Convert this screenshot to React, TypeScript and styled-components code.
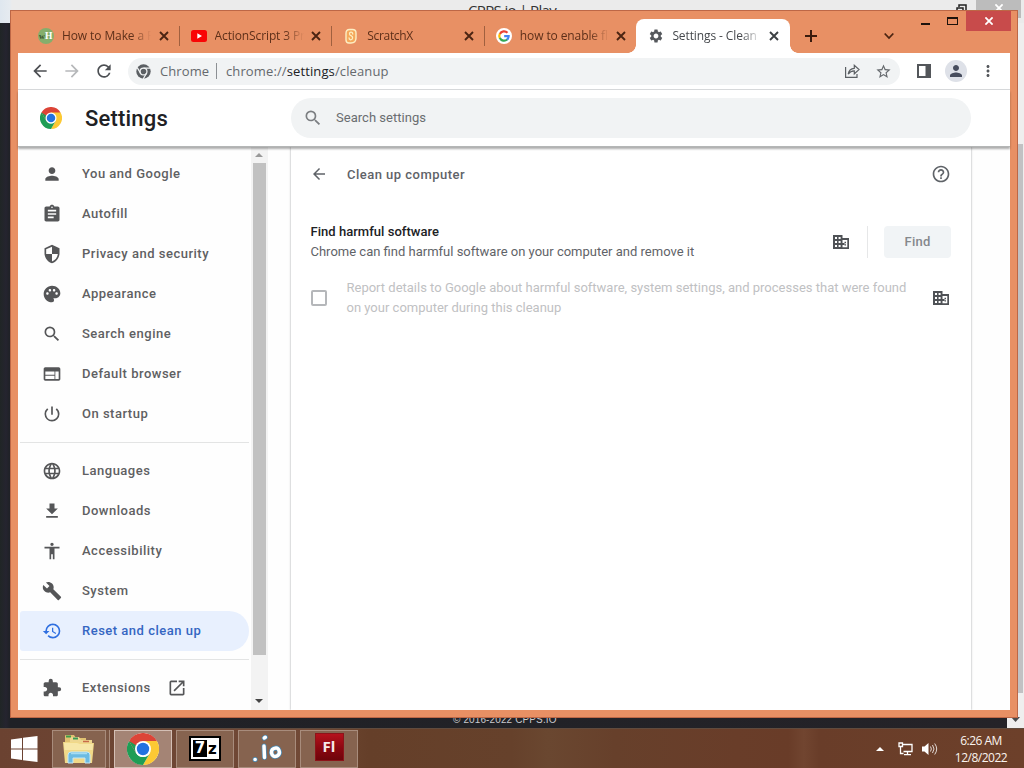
import React from "react";
import styled, {createGlobalStyle, css} from "styled-components";
import {
  MdPerson, MdAssignment, MdSecurity, MdPalette, MdSearch, MdWeb, MdPowerSettingsNew,
  MdLanguage, MdRestore, MdOpenInNew, MdArrowBack, MdArrowForward,
  MdRefresh, MdHelpOutline, MdSettings, MdStarBorder, MdMoreVert, MdExtension,
} from "react-icons/md";

const GlobalStyle = createGlobalStyle`
  * {
    box-sizing: border-box;
  }

  body {
    margin: 0;
    overflow: hidden;
    font-family: Roboto, "Liberation Sans", sans-serif;
  }

  svg {
    display: block;
    flex-shrink: 0;
  }
`

const Desktop = styled.div`
  position: relative;
  width: 1024px;
  height: 768px;
  overflow: hidden;
  background: #222328;
`

/* window behind */

const BackWindow = styled.div`
  position: absolute;
  inset: 0 0 40px 0;
  display: flex;
  flex-direction: column;
`

const BackTitle = styled.div`
  position: relative;
  height: 23px;
  flex-shrink: 0;
  display: flex;
  justify-content: flex-end;
  background: linear-gradient(90deg, #dfe7ef 0, #e6ebf0 10px, #ebebeb 12px);
`

const BackTitleText = styled.div`
  position: absolute;
  left: 468px;
  top: 0;
  font: 15px/20px "Open Sans", sans-serif;
  letter-spacing: -0.65px;
  color: #333;
  white-space: nowrap;
`

const BackRestore = styled.svg`
  margin: 4px 9px 0 0;
`

const BackClose = styled.div`
  width: 45px;
  height: 18px;
  margin-right: 3px;
  padding-top: 4px;
  display: flex;
  justify-content: center;
  background: #bcbcbc;
`

const BackBody = styled.div`
  height: 705px;
  display: flex;
  justify-content: space-between;
  background: linear-gradient(90deg, #202526 0, #25242f 6px, #1f2126 10px, #252328 100%);
`

const BackFooter = styled.div`
  align-self: flex-end;
  margin: 0 0 1px 453px;
  font: 10px/14px "Liberation Sans", sans-serif;
  letter-spacing: 0.12px;
  color: #c9c9cd;
`

const BackScroll = styled.div`
  width: 17px;
  padding: 121px 1px 0 0;
  background: #efeeee;
  display: flex;
  flex-direction: column;
`

const BackThumb = styled.div`
  height: 549px;
  flex-shrink: 0;
  background: #c1c1c3;
`

const BackArrow = styled.svg`
  margin: 24px 0 0 4px;
`

/* browser window */

const Browser = styled.div`
  position: absolute;
  left: 10px;
  top: 10px;
  width: 1008px;
  height: 708px;
  padding: 0 7px 7px;
  display: flex;
  flex-direction: column;
  background: #e89064;
  border: 1px solid #bd6746;
`

const TabStrip = styled.div`
  height: 42px;
  flex-shrink: 0;
  padding: 8px 0 0 9px;
  display: flex;
`

const Tab = styled.div<{$active?: boolean; $divider?: boolean}>`
  position: relative;
  width: 152.6px;
  height: 34px;
  padding: 0 11px;
  display: flex;
  align-items: center;
  color: ${({$active}) => ($active ? '#45484c' : '#5d2f19')};

  ${({$active}) => $active && css`
    width: 153.6px;
    margin-left: -1px;
    padding-left: 12px;
    background: #fff;
    border-radius: 8px 8px 0 0;

    &::before, &::after {
      content: "";
      position: absolute;
      bottom: 0;
      width: 8px;
      height: 8px;
    }

    &::before {
      left: -8px;
      background: radial-gradient(circle at 0 0, transparent 7.5px, #fff 8px);
    }

    &::after {
      right: -8px;
      background: radial-gradient(circle at 100% 0, transparent 7.5px, #fff 8px);
    }
  `}

  ${({$divider}) => $divider && css`
    &::after {
      content: "";
      position: absolute;
      right: 0;
      top: 7px;
      width: 1px;
      height: 20px;
      background: #a0603f;
    }
  `}
`

const TabIcon = styled.div`
  width: 16px;
  height: 16px;
  margin-right: 8px;
  display: flex;
  align-items: center;
  justify-content: center;
`

const TabTitle = styled.div<{$spacing?: string}>`
  width: 89px;
  overflow: hidden;
  white-space: nowrap;
  font: 12px/18px "Open Sans", sans-serif;
  letter-spacing: ${({$spacing}) => $spacing || '-0.1px'};
  mask-image: linear-gradient(90deg, #000 78%, transparent 100%);
`

const TabClose = styled.svg`
  margin-left: auto;
`

const NewTab = styled.svg`
  margin: 11px 0 0 15px;
`

const TabSearch = styled.svg`
  margin: 13px 0 0 67px;
`

const Controls = styled.div`
  position: absolute;
  top: 0;
  right: 6px;
  height: 20px;
  display: flex;
`

const Minimize = styled.div`
  width: 9px;
  height: 2px;
  margin: 12px 17px 0 0;
  background: #1d120c;
`

const Maximize = styled.div`
  width: 11px;
  height: 8px;
  margin: 6px 8px 0 0;
  border: 1px solid #1d120c;
  border-top-width: 2px;
`

const CloseButton = styled.div`
  width: 45px;
  height: 20px;
  display: flex;
  align-items: center;
  justify-content: center;
  background: #c84b4b;
`

const Toolbar = styled.div`
  height: 37px;
  flex-shrink: 0;
  padding-left: 12px;
  display: flex;
  align-items: center;
  background: #fff;
  border-bottom: 1px solid #d6d8da;
  color: #54575b;
`

const NavButton = styled.div<{$muted?: boolean; $gap: number}>`
  margin-right: ${({$gap}) => $gap}px;
  color: ${({$muted}) => ($muted ? '#b6b8ba' : '#4c4f53')};
`

const Omnibox = styled.div`
  width: 772px;
  height: 27px;
  padding: 0 8px 0 8px;
  display: flex;
  align-items: center;
  background: #f1f3f4;
  border-radius: 14px;
  font: 13px/20px "Open Sans", sans-serif;
  color: #65696d;

  b {
    font-weight: 400;
    color: #202124;
  }
`

const OmniLabel = styled.div`
  width: 56px;
  margin-left: 9px;
  letter-spacing: 0.1px;
`

const OmniUrl = styled.div`
  flex: 1;
  padding-left: 9px;
  line-height: 16px;
  border-left: 1px solid #8c9094;
  letter-spacing: 0.12px;
`

const OmniAction = styled.div`
  margin-left: 15px;
`

const Avatar = styled.div`
  width: 22px;
  height: 22px;
  margin: 0 12px 0 14px;
  display: flex;
  align-items: center;
  justify-content: center;
  border-radius: 50%;
  background: #dee1e8;
  color: #474d5e;
`

/* settings page */

const PageHeader = styled.div`
  position: relative;
  z-index: 1;
  height: 57px;
  flex-shrink: 0;
  padding-left: 22px;
  display: flex;
  align-items: center;
  background: #fff;
  border-bottom: 1px solid #b4b6b6;
  box-shadow: 0 2px 2px rgba(0, 0, 0, .32);
`

const PageTitle = styled.div`
  width: 206px;
  margin-left: 23px;
  padding-top: 1px;
  font-size: 22px;
  line-height: 28px;
  font-weight: 500;
  letter-spacing: 0.2px;
  color: #202124;
`

const SearchBox = styled.div`
  width: 680px;
  height: 40px;
  padding: 0 0 1px 12px;
  display: flex;
  align-items: center;
  gap: 13px;
  border-radius: 20px;
  background: #f1f3f4;
  font-size: 13px;
  line-height: 16px;
  letter-spacing: 0.03px;
  color: #6a6d70;
`

const PageBody = styled.div`
  flex: 1;
  min-height: 0;
  display: flex;
  overflow: hidden;
  background: #fefefe;
`

const Menu = styled.div`
  width: 233px;
  padding: 7px 2px 0;
`

const MenuItem = styled.div<{$selected?: boolean}>`
  height: 40px;
  padding-left: 22px;
  display: flex;
  align-items: center;
  border-radius: 3px 20px 20px 3px;
  font-size: 13px;
  font-weight: 500;
  letter-spacing: 0.5px;
  color: ${({$selected}) => ($selected ? '#3566c2' : '#5f6062')};
  background: ${({$selected}) => ($selected ? '#e8f0fe' : 'transparent')};

  svg {
    color: ${({$selected}) => ($selected ? '#2f6fe0' : '#555658')};
  }
`

const MenuLabel = styled.span<{$gap?: number}>`
  margin: 0 ${({$gap}) => $gap || 0}px 2px 20px;
`

const MenuDivider = styled.div`
  height: 1px;
  margin: 8px 0;
  background: #e3e4e4;
`

const Scrollbar = styled.div`
  width: 17px;
  height: 563px;
  padding: 6px 3px 7px 2px;
  display: flex;
  flex-direction: column;
  justify-content: space-between;
  align-items: center;
  background: #f3f3f3;
`

const ScrollThumb = styled.div`
  width: 13px;
  height: 492px;
  margin: 6px 0 auto;
  background: #c1c1c1;
`

const Card = styled.div`
  width: 680px;
  margin-left: 23px;
  background: #fff;
  box-shadow: 0 0 2px rgba(60, 64, 67, .5);
  font-size: 13px;
  line-height: 20px;
  color: #5f6368;
`

const CardHeader = styled.div`
  height: 54px;
  padding: 0 20px 0 19px;
  display: flex;
  align-items: center;
`

const CardTitle = styled.div`
  flex: 1;
  margin-left: 19px;
  padding-top: 1px;
  font-weight: 500;
  letter-spacing: 0.48px;
`

const FindRow = styled.div`
  height: 80px;
  padding: 2px 20px 0;
  display: flex;
  align-items: center;
`

const FindText = styled.div`
  flex: 1;
  margin-left: -0.5px;
`

const FindHeading = styled.div`
  color: #202124;
  font-weight: 500;
  letter-spacing: 0.03px;
`

const Separator = styled.div`
  width: 1px;
  height: 32px;
  margin: 0 16px 0 18px;
  background: #e6e7e8;
`

const FindButton = styled.div`
  width: 67px;
  height: 32px;
  border-radius: 4px;
  background: #f1f4f6;
  line-height: 32px;
  text-align: center;
  font-weight: 500;
  letter-spacing: 0.2px;
  color: #85888c;
`

const ReportRow = styled.div`
  height: 40px;
  margin-top: -3px;
  padding: 0 22px 0 20px;
  display: flex;
  align-items: center;
`

const Checkbox = styled.div`
  width: 16px;
  height: 16px;
  margin: 0 19.5px 1px 0;
  border: 2px solid #b5b7ba;
  border-radius: 2px;
`

const ReportText = styled.div`
  flex: 1;
  color: #bfc1c3;
  white-space: nowrap;
`

/* taskbar */

const Taskbar = styled.div`
  position: absolute;
  inset: auto 0 0 0;
  height: 40px;
  padding: 1px 16px 1px 0;
  display: flex;
  align-items: center;
  border-top: 1px solid #604b3e;
  background: linear-gradient(90deg, #6b4231 0, #714936 30%, #653f29 36%, #66412b 50%, #6a4730 53.500%, #67402b 60%, #693d29 72%, #693c28 77%, #714530 78.500%, #693d29 80%, #6d402a 100%);
`

const Start = styled.div`
  width: 52px;
  padding-left: 11px;
`

const Task = styled.div<{$active?: boolean; $stacked?: boolean}>`
  width: ${({$stacked}) => ($stacked ? 54 : 58)}px;
  height: 38px;
  margin-right: ${({$stacked}) => ($stacked ? 8 : 4)}px;
  display: flex;
  align-items: center;
  justify-content: center;
  border: 1px solid ${({$active}) => ($active ? '#d4bfb5' : '#a88c7c')};
  background: ${({$active}) => ($active ? '#a48475' : '#86634f')};
  box-shadow: ${({$stacked}) => ($stacked ? '3px 0 0 #7a5643, 4px 0 0 #a88c7c' : 'none')};
`

const SevenZip = styled.div`
  width: 32px;
  height: 25px;
  padding: 3px 2px;
  display: flex;
  align-items: center;
  background: #fff;
  border: 2px solid #000;
  font: bold 15px/20px "DejaVu Sans", sans-serif;
  color: #000;

  b {
    width: 14px;
    height: 17px;
    line-height: 17px;
    margin-right: 1px;
    text-align: center;
    background: #000;
    color: #fff;
  }
`

const Flash = styled.div`
  width: 29px;
  height: 28px;
  margin-top: -3px;
  text-align: center;
  font: bold 15px/25px "Open Sans", sans-serif;
  color: #f7e9e8;
  background: linear-gradient(#b5121c, #8b0710 55%, #6e050b);
  border: 1px solid #8d1319;
`

const Tray = styled.div`
  margin-left: auto;
  display: flex;
  align-items: center;
`

const Clock = styled.div`
  width: 54px;
  margin-left: 16px;
  font: 12px/17px "Open Sans", sans-serif;
  letter-spacing: -0.5px;
  text-align: center;
  white-space: nowrap;
  color: #fbf4ee;
`

const Path = ({d, size = 20}: {d: string; size?: number}) => (
  <svg width={size} height={size} viewBox="0 0 24 24" fill="currentColor">
    <path d={d}/>
  </svg>
)

const Cross = ({color = 'currentColor', size = 8, width = 1.8}) => (
  <svg width={size} height={size} viewBox="0 0 8 8" stroke={color} strokeWidth={width}>
    <path d="M.4 .4L7.6 7.6M7.6 .4L.4 7.6"/>
  </svg>
)

const ChromeLogo = ({size = 22}) => (
  <svg width={size} height={size} viewBox="0 0 48 48">
    <circle cx="24" cy="24" r="24" fill="#fff"/>
    <path d="M24 24L3.2 12A24 24 0 0 1 44.8 12Z" fill="#dc4437"/>
    <path d="M24 12H44.8A24 24 0 0 1 24 48L34.4 30Z" fill="#fcc934"/>
    <path d="M34.4 30L24 48A24 24 0 0 1 3.2 12L13.6 30A12 12 0 0 0 34.4 30Z" fill="#1f9d55"/>
    <path d="M3.2 12L13.6 30L24 12Z" fill="#dc4437"/>
    <path d="M3.2 12L13.6 30L16 20Z" fill="#1f9d55"/>
    <circle cx="24" cy="24" r="12" fill="#fff"/>
    <circle cx="24" cy="24" r="9.3" fill="#2372e0"/>
  </svg>
)

const ChromeMono = () => (
  <svg width="15" height="15" viewBox="0 0 48 48">
    <circle cx="24" cy="24" r="23" fill="#5b5f63"/>
    <g stroke="#f1f3f4" strokeWidth="4" fill="none">
      <circle cx="24" cy="24" r="11"/>
      <path d="M24 13H45M14.5 29.5L4 11.500M33.500 29.500L23 48"/>
    </g>
  </svg>
)

const Building = () => (
  <svg width="16" height="14" viewBox="0 0 16 14">
    <path d="M0 0H9.500V3H16V14H0Z" fill="#4f5256"/>
    <path d="M2 2h2v2H2zM5.600 2h2v2h-2zM2 6h2v2H2zM5.600 6h2v2h-2zM2 10h2v2H2zM5.600 10h2v2h-2zM9.500 5H14.300V12.200H9.500V10h2V8h-2z" fill="#fff"/>
    <path d="M11.500 6.700H13V8.200H11.500zM11.500 9.300H13V10.600H11.500z" fill="#4f5256"/>
  </svg>
)

const WikiHow = () => (
  <svg width="16" height="16" viewBox="0 0 16 16">
    <circle cx="8" cy="8" r="8" fill="#85ae6c"/>
    <text x="1" y="11" fontFamily="Liberation Serif, serif" fontSize="8" fontWeight="700" fill="#35502b">w</text>
    <text x="7" y="11" fontFamily="Liberation Serif, serif" fontSize="9.500" fontWeight="700" fill="#fff">H</text>
  </svg>
)

const YouTube = () => (
  <svg width="16" height="12" viewBox="0 0 16 12">
    <rect width="16" height="12" rx="2.500" fill="#f90505"/>
    <path d="M6.300 3.300v5.400L11 6z" fill="#fff"/>
  </svg>
)

const Scratch = () => (
  <svg width="12" height="16" viewBox="0 0 12 16" fill="none">
    <path d="M4.500 1.500h3q3.500 0 3.500 3.500v5q0 5-5 5H4Q1 15 1 12V5.500q0-4 3.500-4z" fill="#f5a95c" stroke="#fdeec4" strokeWidth="1.400"/>
    <path d="M7.700 6.500V5.800Q7.500 4 5.900 4.200 4.300 4.500 4.500 6 4.700 7.300 6 7.600 7.800 8.300 7.600 10 7.300 11.900 5.500 11.800 4 11.500 4 9.500" stroke="#fdeec4" strokeWidth="1.300"/>
  </svg>
)

const Google = () => (
  <svg width="16" height="16" viewBox="0 0 48 48">
    <circle cx="24" cy="24" r="24" fill="#fff"/>
    <g fill="none" strokeWidth="6.500">
      <path d="M34.500 14.500A14 14 0 0 0 11.500 18" stroke="#ea4335"/>
      <path d="M11.500 17.500A14 14 0 0 0 11.500 30.500" stroke="#fbbc05"/>
      <path d="M11.500 30A14 14 0 0 0 33.500 34.500" stroke="#34a853"/>
      <path d="M33 35A14 14 0 0 0 38 24.500H24.500" stroke="#4285f4"/>
    </g>
  </svg>
)

const Explorer = () => (
  <svg width="34" height="32" viewBox="0 0 34 32">
    <path d="M3 7V3q0-1 1-1h8l2 3h10v24H3z" fill="#e0c171"/>
    <path d="M8 8V5q0-1 1-1h8l2 3h11v22H8z" fill="#eed790"/>
    <path d="M4 3.500h5" stroke="#3d9a4a" strokeWidth="2"/>
    <path d="M11 5.500h5" stroke="#3a9a54" strokeWidth="2"/>
    <path d="M21 8.500h6" stroke="#c86b4a" strokeWidth="1.500"/>
    <path d="M1 9h14l3 1h14l-2 20H3z" fill="#f1d988"/>
    <path d="M2 10h13l3 1h13l-.5 6H2.500z" fill="#f7e7a8"/>
    <path d="M6 30V22q0-3 3-3h16q3 0 3 3v8h-5v-5H11v5z" fill="#6cbbe2" stroke="#c5e8f6" strokeWidth="1"/>
    <path d="M9 20.500h16" stroke="#a6dcf2" strokeWidth="1.500"/>
  </svg>
)

const IoLogo = () => (
  <svg width="30" height="28" viewBox="0 0 30 28" fill="none" stroke="#fff" strokeLinecap="round">
    <g stroke="#4789b4" strokeWidth="5">
      <path d="M3 24.500h.2M12.300 3l1-.7M12 11l.5 11.500M24 13Q19 13.500 19.500 18 20.500 22.500 25 21 28.500 19 27 15.500 26 12.800 24 13"/>
    </g>
    <g strokeWidth="3.500">
      <path d="M3 24.500h.2M12.300 3l1-.7M12 11l.5 11.500M24 13Q19 13.500 19.500 18 20.500 22.500 25 21 28.500 19 27 15.500 26 12.800 24 13"/>
    </g>
  </svg>
)

const paths = {
  download: 'M19 9h-4V3H9v6H5l7 7 7-7zM5 18v2h14v-2H5z',
  accessibility: 'M12 2c1.100 0 2 .9 2 2s-.9 2-2 2-2-.9-2-2 .9-2 2-2zm9 7h-6v13h-2v-6h-2v6H9V9H3V7h18v2z',
  wrench: 'M22.700 19l-9.100-9.100c.9-2.300.4-5-1.500-6.900-2-2-5-2.400-7.400-1.300L9 6 6 9 1.600 4.700C.4 7.100.9 10.100 2.900 12.100c1.900 1.900 4.600 2.400 6.900 1.500l9.100 9.100c.4.4 1 .4 1.400 0l2.300-2.300c.5-.4.5-1.100.1-1.400z',
}

const tabs = [
  {title: 'How to Make a F', icon: <WikiHow/>, divider: true},
  {title: 'ActionScript 3 Pr', icon: <YouTube/>, divider: true, spacing: '-0.12px'},
  {title: 'ScratchX', icon: <Scratch/>, divider: true, spacing: '-0.3px'},
  {title: 'how to enable fl', icon: <Google/>},
  {title: 'Settings - Clean', icon: <MdSettings size={16} color="#55585c"/>, active: true},
]

const mainItems = [
  {label: 'You and Google', icon: <MdPerson size={20}/>},
  {label: 'Autofill', icon: <MdAssignment size={20}/>},
  {label: 'Privacy and security', icon: <MdSecurity size={20}/>},
  {label: 'Appearance', icon: <MdPalette size={20}/>},
  {label: 'Search engine', icon: <MdSearch size={20}/>},
  {label: 'Default browser', icon: <MdWeb size={20}/>},
  {label: 'On startup', icon: <MdPowerSettingsNew size={20}/>},
]

const advancedItems = [
  {label: 'Languages', icon: <MdLanguage size={20}/>},
  {label: 'Downloads', icon: <Path d={paths.download}/>},
  {label: 'Accessibility', icon: <Path d={paths.accessibility}/>},
  {label: 'System', icon: <Path d={paths.wrench}/>},
  {label: 'Reset and clean up', icon: <MdRestore size={20}/>, selected: true},
]

const App = () => {
  return (
    <Desktop>
      <GlobalStyle/>
      <BackWindow>
        <BackTitle>
          <BackTitleText>CPPS.io | Play</BackTitleText>
          <BackRestore width="11" height="10" viewBox="0 0 11 10" fill="none" stroke="#222" strokeWidth="1.500">
            <path d="M3 3V1h7v6H8M1 4h6v5H1z"/>
          </BackRestore>
          <BackClose><Cross color="#fff" size={8}/></BackClose>
        </BackTitle>
        <BackBody>
          <BackFooter>© 2016-2022 CPPS.IO</BackFooter>
          <BackScroll>
            <BackThumb/>
            <BackArrow width="9" height="5" viewBox="0 0 9 5"><path d="M0 0h9L4.500 5z" fill="#4b4b4b"/></BackArrow>
          </BackScroll>
        </BackBody>
      </BackWindow>

      <Browser>
        <TabStrip>
          {tabs.map((tab) => (
            <Tab key={tab.title} $active={tab.active} $divider={tab.divider}>
              <TabIcon>{tab.icon}</TabIcon>
              <TabTitle $spacing={tab.spacing}>{tab.title}</TabTitle>
              <TabClose width="10" height="10" viewBox="0 0 10 10" stroke={tab.active ? '#3c4043' : '#4b2412'} strokeWidth="1.900">
                <path d="M1 1l8 8M9 1L1 9"/>
              </TabClose>
            </Tab>
          ))}
          <NewTab width="12" height="12" viewBox="0 0 12 12" stroke="#3a1c0e" strokeWidth="2">
            <path d="M6 0v12M0 6h12"/>
          </NewTab>
          <TabSearch width="10" height="8" viewBox="0 0 10 8" fill="none" stroke="#4b2412" strokeWidth="1.800">
            <path d="M.7 1.500L5 6l4.300-4.500"/>
          </TabSearch>
          <Controls>
            <Minimize/>
            <Maximize/>
            <CloseButton><Cross color="#fff"/></CloseButton>
          </Controls>
        </TabStrip>

        <Toolbar>
          <NavButton $gap={12}><MdArrowBack size={20}/></NavButton>
          <NavButton $gap={12} $muted><MdArrowForward size={20}/></NavButton>
          <NavButton $gap={14}><MdRefresh size={20}/></NavButton>
          <Omnibox>
            <ChromeMono/>
            <OmniLabel>Chrome</OmniLabel>
            <OmniUrl>chrome://<b>settings</b>/cleanup</OmniUrl>
            <OmniAction>
              <svg width="16" height="14" viewBox="0 0 16 14" fill="none" stroke="#5b5f63" strokeWidth="1.200">
                <path d="M1.600 3v10.300H13V10M4.200 10.200Q5 4.600 10.300 4.300V1.300L15 5.600l-4.700 4.200V6.900Q6.500 6.800 4.200 10.200z"/>
              </svg>
            </OmniAction>
            <OmniAction><MdStarBorder size={17}/></OmniAction>
          </Omnibox>
          <svg width="14" height="14" viewBox="0 0 14 14" style={{marginLeft: 17}}>
            <path d="M0 0h14v14H0z" fill="#53565a"/>
            <path d="M2 2h6.500v10H2z" fill="#fff"/>
          </svg>
          <Avatar><MdPerson size={18}/></Avatar>
          <MdMoreVert size={18}/>
        </Toolbar>

        <PageHeader>
          <ChromeLogo/>
          <PageTitle>Settings</PageTitle>
          <SearchBox>
            <MdSearch size={20} color="#7b7e81"/>
            Search settings
          </SearchBox>
        </PageHeader>

        <PageBody>
          <Menu>
            {mainItems.map((item) => (
              <MenuItem key={item.label}>{item.icon}<MenuLabel>{item.label}</MenuLabel></MenuItem>
            ))}
            <MenuDivider/>
            {advancedItems.map((item) => (
              <MenuItem key={item.label} $selected={item.selected}>{item.icon}<MenuLabel>{item.label}</MenuLabel></MenuItem>
            ))}
            <MenuDivider/>
            <MenuItem>
              <MdExtension size={20}/>
              <MenuLabel $gap={16}>Extensions</MenuLabel>
              <MdOpenInNew size={20}/>
            </MenuItem>
          </Menu>
          <Scrollbar>
            <svg width="8" height="4" viewBox="0 0 8 4"><path d="M0 4L4 0l4 4z" fill="#999"/></svg>
            <ScrollThumb/>
            <svg width="8" height="4" viewBox="0 0 8 4"><path d="M0 0h8L4 4z" fill="#444"/></svg>
          </Scrollbar>
          <Card>
            <CardHeader>
              <MdArrowBack size={18}/>
              <CardTitle>Clean up computer</CardTitle>
              <MdHelpOutline size={20}/>
            </CardHeader>
            <FindRow>
              <FindText>
                <FindHeading>Find harmful software</FindHeading>
                Chrome can find harmful software on your computer and remove it
              </FindText>
              <Building/>
              <Separator/>
              <FindButton>Find</FindButton>
            </FindRow>
            <ReportRow>
              <Checkbox/>
              <ReportText>
                Report details to Google about harmful software, system settings, and processes that were found
                <br/>
                on your computer during this cleanup
              </ReportText>
              <Building/>
            </ReportRow>
          </Card>
        </PageBody>
      </Browser>

      <Taskbar>
        <Start>
          <svg width="27" height="26" viewBox="0 0 27 26" fill="#fff">
            <path d="M0 3.600L11 2v10.500H0zM12 1.800L26.500 0v12.500H12zM0 13.500h11V24L0 22.400zM12 13.500h14.500V26L12 24.200z"/>
          </svg>
        </Start>
        <Task $stacked><Explorer/></Task>
        <Task $active><ChromeLogo size={32}/></Task>
        <Task><SevenZip><b>7</b>z</SevenZip></Task>
        <Task><IoLogo/></Task>
        <Task><Flash>Fl</Flash></Task>
        <Tray>
          <svg width="8" height="4" viewBox="0 0 8 4"><path d="M0 4L4 0l4 4z" fill="#fff"/></svg>
          <svg width="15" height="14" viewBox="0 0 15 14" fill="none" stroke="#fff" strokeWidth="1.300" style={{marginLeft: 14}}>
            <path d="M5 2.500h9v7H5.500M9.500 9.500v3M6 12.600h7M2.500 5v6.500h3M1 1h3.500v3.500H1z"/>
          </svg>
          <svg width="16" height="14" viewBox="0 0 16 14" fill="none" stroke="#fff" style={{marginLeft: 9}}>
            <path d="M0 4.500h2.500L6.500 1v12L2.500 9.500H0z" fill="#fff" stroke="none"/>
            <path d="M8.500 4.500q1.700 2.500 0 5M10.500 3q3 4 0 8M12.700 1.500q4 5.500 0 11" strokeOpacity=".8"/>
          </svg>
          <Clock>6:26 AM<br/>12/8/2022</Clock>
        </Tray>
      </Taskbar>
    </Desktop>
  )
}

export default App;
